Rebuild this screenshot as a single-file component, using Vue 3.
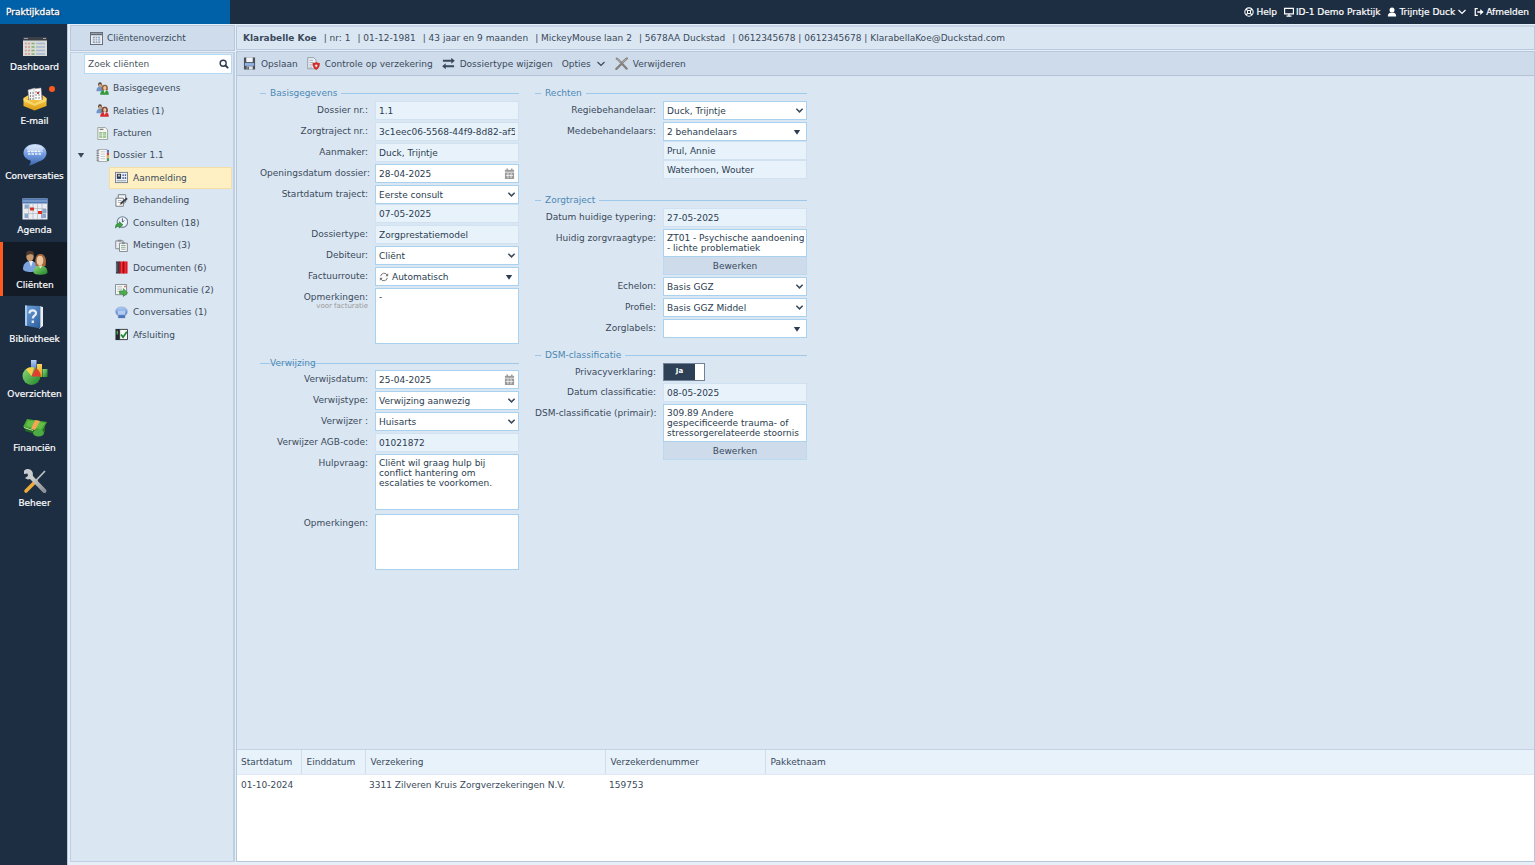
<template>
  <div class="app">
    <!-- Icon sprite -->
    <svg class="sprite" aria-hidden="true">
      <defs>
        <linearGradient id="gBlue" x1="0" y1="0" x2="0" y2="1">
          <stop offset="0" stop-color="#b9d2f5" />
          <stop offset="0.5" stop-color="#6f9ade" />
          <stop offset="1" stop-color="#3e68b0" />
        </linearGradient>
        <linearGradient id="gBook" x1="0" y1="0" x2="1" y2="1">
          <stop offset="0" stop-color="#6fa3dc" />
          <stop offset="1" stop-color="#2c5c9c" />
        </linearGradient>
        <linearGradient id="gGold" x1="0" y1="0" x2="0" y2="1">
          <stop offset="0" stop-color="#ffd85a" />
          <stop offset="1" stop-color="#dc9a12" />
        </linearGradient>
        <linearGradient id="gGreen" x1="0" y1="0" x2="1" y2="1">
          <stop offset="0" stop-color="#8fdc7a" />
          <stop offset="1" stop-color="#1f8427" />
        </linearGradient>
        <linearGradient id="gMetal" x1="0" y1="0" x2="1" y2="1">
          <stop offset="0" stop-color="#d9d9d9" />
          <stop offset="1" stop-color="#8b8f94" />
        </linearGradient>
      </defs>

      <symbol id="dashboard" viewBox="0 0 26 26">
        <rect x="1" y="5" width="24" height="19" fill="#d9dbd6" />
        <rect x="1" y="5" width="24" height="3.5" fill="#3c4046" />
        <path d="M2 6.5h4M21 6.5h3" stroke="#9aa0a6" />
        <path d="M3 11.5h5M3 15h5M3 18.5h5M3 22h5" stroke="#d99b87" stroke-width="1.4" stroke-dasharray="2 1" />
        <path d="M9.5 11.5h3M9.5 15h3M9.5 18.5h3M9.5 22h3" stroke="#7fb072" stroke-width="1.4" />
        <path d="M14 11.5h9M14 15h9M14 18.5h9M14 22h9" stroke="#a4b9d3" stroke-width="1.4" />
      </symbol>
      <symbol id="email" viewBox="0 0 26 26">
        <path d="M6 4l7-2 1.500 13-7 1z" fill="#f4f4f4" stroke="#aaa" stroke-width=".5" />
        <path d="M12 3l7-1 1 14-8 1z" fill="#fff" stroke="#aaa" stroke-width=".5" />
        <path d="M8.500 6v8M11 6v8M14 5v9M17 5v9" stroke="#8c8c92" stroke-dasharray="2 1" />
        <path d="M16 6v2" stroke="#d53a2d" stroke-width="2" />
        <path d="M1.500 12l5-3v5h14v-5l4 3v8l-12 4.500-11-4.500z" fill="url(#gGold)" />
        <path d="M1.500 12l11 5.500 12-5.500v3l-12 5-11-5z" fill="#ffe98e" opacity=".6" />
      </symbol>
      <symbol id="chat" viewBox="0 0 26 26">
        <path d="M13 3c7 0 11.500 4 11.500 9 0 4-3 7-7 8.300C15 21 11 24 7 24.500c1.500-2 2-3.500 1.500-5C4.500 18.500 1.500 15.500 1.500 12 1.500 7 6 3 13 3z" fill="url(#gBlue)" />
        <ellipse cx="13" cy="7.500" rx="8.500" ry="3.500" fill="#fff" opacity=".45" />
        <path d="M5.500 10.500h15M6 13h14" stroke="#eef4fd" stroke-width="1.300" stroke-dasharray="2.500 1" />
      </symbol>
      <symbol id="agenda" viewBox="0 0 26 26">
        <rect x=".5" y="3.500" width="25" height="21" fill="#e9ecf1" />
        <rect x=".5" y="3.500" width="25" height="5" fill="#4f79b5" />
        <path d="M1 6h24" stroke="#9db9df" />
        <path d="M2.500 9.500h5v4h-5zM2.500 19h3.500v4H2.500zM20 14h4.500v4H20zM19 19h5v4h-5z" fill="#8aa6cc" />
        <path d="M2 13.500h22M2 18.500h22M6.500 9v15M11 9v15M15.500 9v15M20 9v15" stroke="#b3b9c4" stroke-width=".7" />
        <path d="M8 12.500h4v3H8zM16 16h4v3h-4z" fill="#d6321e" />
      </symbol>
      <symbol id="clients" viewBox="0 0 26 26">
        <path d="M1 19c0-5 3-8 7.500-8s7 3 7 8c0 2-3 3-7 3s-7.500-1-7.500-3z" fill="#7ba2dd" />
        <path d="M7 11l2 6 2-6z" fill="#e9eef7" />
        <ellipse cx="8" cy="6.500" rx="3.700" ry="4.800" fill="#c79a6e" />
        <path d="M4 6C3.500 2 5.500.5 8.500.8c3 .2 4 2.200 3.400 5.200C11 3.500 7 3.500 4 6z" fill="#4b3a2d" />
        <path d="M11.500 22.500c0-4.500 3-7 7-7s7 2.500 7 7c0 3-14 3-14 0z" fill="url(#gGreen)" />
        <path d="M13.500 16c-1-9 1-12 5-12s6.500 4 5 12z" fill="#a5683a" />
        <ellipse cx="18" cy="10.500" rx="3.300" ry="4.800" fill="#ecc7a2" />
        <path d="M16.500 15.500l2 3 2-3z" fill="#f4ddc4" />
      </symbol>
      <symbol id="library" viewBox="0 0 26 26">
        <path d="M17 2l4 1v19l-4 3z" fill="#e9edf2" />
        <path d="M18.500 3v20" stroke="#9aa7b8" stroke-width=".7" />
        <path d="M3 1.500l15 .5v22.500L3 21.500z" fill="url(#gBook)" />
        <path d="M3 1.500l2 .1v20.300l-2-.4z" fill="#a9c9ee" />
        <path d="M7.500 9.500c0-4 6.500-4 6.500-.3 0 2.500-3.200 2.600-3.200 5.300M10.800 16.500v2.500" fill="none" stroke="#e6edf6" stroke-width="2.300" />
      </symbol>
      <symbol id="charts" viewBox="0 0 26 26">
        <rect x="9" y="1" width="5.500" height="13" fill="url(#gBlue)" />
        <rect x="15" y="5" width="5" height="13" fill="url(#gGold)" />
        <rect x="20.500" y="10" width="5" height="8" fill="url(#gGreen)" />
        <circle cx="9.500" cy="17" r="9" fill="url(#gGreen)" />
        <path d="M9.500 17L4 10.500c2-2 5-2.500 8-2z" fill="#f9d04b" />
        <path d="M9.500 17.500l4-8.500c3 1.500 5 4.500 5 8.500z" fill="#e33c31" />
      </symbol>
      <symbol id="finance" viewBox="0 0 26 26">
        <path d="M4 14l12 3 7-4v6l-7 4-6-3-7-2z" fill="#236b22" />
        <path d="M5 6l20 3-5 9L1 14z" fill="#48ab35" />
        <path d="M6 7.500l17 2.500-4 6-15-3z" fill="#8bd25c" opacity=".45" />
        <path d="M13 7l5 1-5 9-4-1z" fill="#f3a755" />
        <ellipse cx="16.500" cy="20" rx="5.500" ry="3.500" fill="#4cab43" />
        <path d="M2 14.500l9 3" stroke="#b5e7a5" />
      </symbol>
      <symbol id="tools" viewBox="0 0 26 26">
        <path d="M4 23L14 13" stroke="#eeab3a" stroke-width="3.600" stroke-linecap="round" />
        <path d="M13 13.500L23 3" stroke="#b9bdc2" stroke-width="1.800" />
        <path d="M8 8l14.500 15" stroke="url(#gMetal)" stroke-width="4" stroke-linecap="round" />
        <path d="M2 3c2-3 7-2.500 8.500 1 .8 2.500.4 5-1 6-2 2-4.500 1.800-6.500 0l3-2-.5-2.500-3.500.5z" fill="#c9cbce" />
      </symbol>

      <symbol id="table" viewBox="0 0 14 14">
        <rect x=".5" y=".5" width="13" height="13" fill="#eef1f4" stroke="#5d6875" />
        <path d="M1 2.500h12" stroke="#5d6875" stroke-width="2" />
        <path d="M3 5h8v7H3z" fill="#8ea2bb" />
        <path d="M3 7.300h8M3 9.600h8M5.700 5v7M8.300 5v7" stroke="#f4f6f9" stroke-width=".8" />
      </symbol>
      <symbol id="people-green" viewBox="0 0 14 14">
        <path d="M.5 10c0-4 1.500-5 4-5s4 1 4 5z" fill="#6f95ca" />
        <ellipse cx="4.300" cy="2.800" rx="2" ry="2.600" fill="#4c3a2d" />
        <ellipse cx="4.300" cy="3.800" rx="1.500" ry="1.900" fill="#cf9f76" />
        <path d="M6 9c-.5-5 1-6 3.500-6S13.500 5 12.500 9z" fill="#94603b" />
        <ellipse cx="9.500" cy="6.500" rx="1.700" ry="2.200" fill="#ecc49f" />
        <path d="M4.500 13.800c0-3.500 2-4.800 5-4.800s4.300 1.500 4.300 4.800z" fill="#339a3a" />
        <path d="M8.300 9l1.200 3 1.200-3z" fill="#fff" />
      </symbol>
      <symbol id="people-red" viewBox="0 0 14 14">
        <path d="M.5 10c0-4 1.500-5 4-5s4 1 4 5z" fill="#6f95ca" />
        <ellipse cx="4.300" cy="2.800" rx="2" ry="2.600" fill="#4c3a2d" />
        <ellipse cx="4.300" cy="3.800" rx="1.500" ry="1.900" fill="#cf9f76" />
        <path d="M6 9c-.5-5 1-6 3.500-6S13.500 5 12.500 9z" fill="#7c4630" />
        <ellipse cx="9.500" cy="6.500" rx="1.700" ry="2.200" fill="#ecc49f" />
        <path d="M4.500 13.800c0-3.500 2-4.800 5-4.800s4.300 1.500 4.300 4.800z" fill="#d52c2c" />
        <path d="M8.300 9l1.200 3 1.200-3z" fill="#fff" />
      </symbol>
      <symbol id="invoice" viewBox="0 0 14 14">
        <path d="M2 .5h8l2.500 2.500v10.500H2z" fill="#f5f6f4" stroke="#9aa09a" />
        <path d="M4 2.500h4" stroke="#555" />
        <path d="M3.500 5.500h7.500v6H3.500z" fill="#86b97b" />
        <path d="M3.500 7.500h7.500M3.500 9.500h7.500M7 5.500v6" stroke="#f3f7f1" stroke-width=".8" />
      </symbol>
      <symbol id="dossier" viewBox="0 0 14 14">
        <path d="M2 .5h10v13H2z" fill="#fbfbfb" stroke="#a0a4aa" />
        <path d="M.5 2h3M.5 4.500h3M.5 7h3M.5 9.500h3M.5 12h3" stroke="#646a73" stroke-width=".9" />
        <path d="M5 3h5M5 5.500h5M5 8h5M5 10.500h5" stroke="#b1b5bb" stroke-width=".8" />
        <path d="M13 1v3" stroke="#4472c4" stroke-width="2" />
        <path d="M13 4v3" stroke="#d33" stroke-width="2" />
        <path d="M13 7v3" stroke="#e9b52a" stroke-width="2" />
        <path d="M13 10v3" stroke="#3f9a46" stroke-width="2" />
      </symbol>
      <symbol id="card" viewBox="0 0 14 14">
        <rect x=".5" y="1.500" width="13" height="11" fill="#eff2f7" stroke="#777f8b" />
        <rect x="2" y="3" width="4.500" height="5.500" fill="#263c66" />
        <circle cx="4.300" cy="5" r="1.200" fill="#e6b58f" />
        <path d="M8 3.500h1.500v2H8zM10.500 3.500H12v2h-1.500zM8 6.500h1.500v2H8zM10.500 6.500H12v2h-1.500z" fill="#526a92" />
        <path d="M2 10.500h10" stroke="#8b97aa" />
      </symbol>
      <symbol id="edit" viewBox="0 0 14 14">
        <path d="M3.500.8h8v8l-3 2h-5z" fill="#f5f6f7" stroke="#6f757c" />
        <path d="M1 4.500h8v8.700H1z" fill="#fff" stroke="#6f757c" />
        <path d="M3 7h4M3 9h3" stroke="#a8adb3" />
        <path d="M6 10.500l7-6" stroke="#3c4148" stroke-width="2.200" />
        <path d="M5 11.500l1.500-.4" stroke="#c69b5a" stroke-width="1.200" />
      </symbol>
      <symbol id="clock" viewBox="0 0 14 14">
        <circle cx="8" cy="6.500" r="5.700" fill="#eef4fb" stroke="#6d7f98" stroke-width="1.200" />
        <path d="M8 2.500V6.500l2-1.500" fill="none" stroke="#47566b" />
        <path d="M.5 13c0-3.500 1-5 4-5V6l4 3.500-4 3.500v-2C3 11 2 11.500.5 13z" fill="#3ea443" stroke="#1d6e29" stroke-width=".6" />
      </symbol>
      <symbol id="clipboards" viewBox="0 0 14 14">
        <path d="M.8 2h8v8.500h-8z" fill="#edf0f2" stroke="#80868d" />
        <path d="M3 .8h4v2H3z" fill="#868b91" />
        <path d="M4.800 4.500h8.500v9H4.800z" fill="#f8f9f9" stroke="#80868d" />
        <path d="M7.500 3.500h3v2h-3z" fill="#868b91" />
        <path d="M6.500 7h5M6.500 9h5M6.500 11h5" stroke="#7fa083" stroke-width=".9" />
      </symbol>
      <symbol id="binders" viewBox="0 0 14 14">
        <path d="M1 .5h4v13H1z" fill="#353a40" />
        <path d="M2 2v10" stroke="#79818a" />
        <path d="M5 .5h8.500v13H5z" fill="#dc1523" />
        <path d="M7 1v12M11 1v12" stroke="#f04a48" stroke-width=".8" />
        <path d="M5 .5v13M9.300.5v13" stroke="#83080f" stroke-width=".8" />
      </symbol>
      <symbol id="send" viewBox="0 0 14 14">
        <path d="M.5.500h12v11H.5z" fill="#f5f7f6" stroke="#7c858b" />
        <path d="M10 2h1.500v1.500H10z" fill="#d14133" />
        <path d="M2.500 3h5M2.500 5.500h5M2.500 8h3" stroke="#a9b3b5" />
        <path d="M5 7.500h4V5l4.500 4.500-4.500 4v-3H5z" fill="#50b04a" stroke="#247c2b" stroke-width=".7" />
      </symbol>
      <symbol id="bubble" viewBox="0 0 14 14">
        <path d="M7 1c4 0 6.300 2.200 6.300 5 0 2-1 3.500-2.500 4.300v2.500H3.500v-2.500C1.700 9.500.7 8 .7 6 .7 3.200 3 1 7 1z" fill="url(#gBlue)" stroke="#7890b8" stroke-width=".5" />
        <path d="M3 5h8v4.500H3z" fill="#b9d0f2" opacity=".9" />
      </symbol>
      <symbol id="closing" viewBox="0 0 14 14">
        <path d="M.5 1h5v12h-5z" fill="#24292e" />
        <path d="M2.500 3v4" stroke="#4da653" stroke-width="1.500" />
        <path d="M5 1.500h8.500v11H5z" fill="#f5f8f5" stroke="#30363c" />
        <path d="M6.500 7l2.200 3 4-6" fill="none" stroke="#17882b" stroke-width="1.800" />
      </symbol>
      <symbol id="save" viewBox="0 0 14 14">
        <path d="M1 .5h12v13H1z" fill="#4a525c" />
        <path d="M3.500.500h7v5h-7z" fill="#f2f4f6" />
        <path d="M2 6.500h10v3H2z" fill="#8fb3ea" />
        <path d="M4 10h6.500v3.500H4z" fill="#dfe3e7" />
        <path d="M5.500 10.500v3" stroke="#3d444d" stroke-width="1.500" />
      </symbol>
      <symbol id="shield" viewBox="0 0 14 14">
        <path d="M.8.700h6.500l2.500 2.500v9.500h-9z" fill="#eef1f5" stroke="#8f99a6" />
        <path d="M2.500 3.500h4M2.500 6h5M2.500 8.500h4M2.500 11h3" stroke="#8c98a8" stroke-width=".8" />
        <path d="M6 6.500c1.500 0 3-.5 4-1.200 1 .7 2.500 1.200 3.800 1.200 0 4-1 6-3.900 7.400C7 12.500 6 10.500 6 6.500z" fill="#d22b2b" />
        <path d="M9.900 8v3M8.400 9.500h3" stroke="#fff" stroke-width="1" />
      </symbol>
      <symbol id="swap" viewBox="0 0 14 14">
        <path d="M1 4h10M3 10h10" stroke="currentColor" stroke-width="2" />
        <path d="M10 .8L13.800 4 10 7.200zM4 6.800L.2 10 4 13.200z" fill="currentColor" />
      </symbol>
      <symbol id="cross" viewBox="0 0 14 14">
        <path d="M2 1.800C5 4 9 9 12.500 12.500M12.800 1.500C9 4.500 5.500 9 1.500 12.800" stroke="#85817d" stroke-width="2.500" stroke-linecap="round" fill="none" />
        <path d="M2 1.500l4 4M12.500 1.500L8 6" stroke="#b9b6b2" stroke-width="1" />
      </symbol>
      <symbol id="chevron" viewBox="0 0 10 10">
        <path d="M1.500 3l3.500 3.500L8.500 3" fill="none" stroke="currentColor" stroke-width="1.700" />
      </symbol>
      <symbol id="chevron-thin" viewBox="0 0 10 10">
        <path d="M1.500 3l3.500 3.500L8.500 3" fill="none" stroke="currentColor" stroke-width="1.200" />
      </symbol>
      <symbol id="triangle" viewBox="0 0 10 10">
        <path d="M1 2.500h8L5 8.500z" fill="currentColor" />
      </symbol>
      <symbol id="calendar" viewBox="0 0 12 12">
        <path d="M1 2h10v10H1z" fill="#9a9a9a" />
        <path d="M3.500.5v2.500M8.500.5v2.500" stroke="#9a9a9a" stroke-width="1.600" />
        <path d="M1 4.600h10M2 8.100h8M4.300 5.500V11M7.700 5.500V11" stroke="#fff" stroke-width=".8" />
      </symbol>
      <symbol id="refresh" viewBox="0 0 12 12">
        <path d="M2 5a4.200 4.200 0 0 1 8-1M10 7a4.200 4.200 0 0 1-8 1" fill="none" stroke="#777" stroke-width="1.200" />
        <path d="M11 1.500v3.500H7.500zM1 10.500V7h3.500z" fill="#777" />
      </symbol>
      <symbol id="search" viewBox="0 0 12 12">
        <circle cx="5" cy="5" r="3.600" fill="none" stroke="#2b3b4e" stroke-width="1.700" />
        <path d="M7.500 7.500l3.500 3.500" stroke="#2b3b4e" stroke-width="2.200" />
      </symbol>
      <symbol id="help" viewBox="0 0 12 12">
        <circle cx="6" cy="6" r="5" fill="none" stroke="#fff" stroke-width="1.300" />
        <circle cx="6" cy="6" r="2" fill="none" stroke="#fff" stroke-width="1.200" />
        <path d="M2.500 2.500l2 2M9.500 2.500l-2 2M2.500 9.500l2-2M9.500 9.500l-2-2" stroke="#fff" stroke-width="1.500" />
      </symbol>
      <symbol id="monitor" viewBox="0 0 12 12">
        <path d="M.7 1.700h10.600v6.600H.7z" fill="none" stroke="#fff" stroke-width="1.400" />
        <path d="M3 10.800h6M6 8.500v2" stroke="#fff" stroke-width="1.500" />
      </symbol>
      <symbol id="user" viewBox="0 0 12 12">
        <circle cx="6" cy="3.500" r="3" fill="#fff" />
        <path d="M1 11.500c0-3.500 1.500-4.500 3-4.700h4c1.500.2 3 1.200 3 4.700z" fill="#fff" />
      </symbol>
      <symbol id="logout" viewBox="0 0 12 12">
        <path d="M4.500 2H1.500v8h3" fill="none" stroke="#fff" stroke-width="1.500" />
        <path d="M4 5h3.500V2.500L11.500 6 7.500 9.500V7H4z" fill="#fff" />
      </symbol>
    </svg>

    <header class="topbar">
      <div class="brand">Praktijkdata</div>
      <nav class="account">
        <a href="#"><svg class="ico-xs"><use href="#help" /></svg>Help</a>
        <a href="#"><svg class="ico-xs"><use href="#monitor" /></svg>ID-1 Demo Praktijk</a>
        <a href="#"><svg class="ico-xs"><use href="#user" /></svg>Trijntje Duck<svg class="ico-xs"><use href="#chevron-thin" /></svg></a>
        <a href="#"><svg class="ico-xs"><use href="#logout" /></svg>Afmelden</a>
      </nav>
    </header>

    <div class="body">
      <nav class="modules">
        <div class="module-list">
          <a v-for="item in modules" :key="item.label" href="#" class="module" :class="{ active: item.active }">
            <svg class="ico-lg"><use :href="`#${item.icon}`" /></svg>
            <span>{{ item.label }}</span>
            <i v-if="item.badge" class="dot"></i>
          </a>
        </div>
      </nav>

      <aside class="side">
        <a href="#" class="side-head"><svg class="ico-sm"><use href="#table" /></svg>Cliëntenoverzicht</a>
        <div class="side-body">
          <div class="search">
            <input v-model="query" type="text" aria-label="Zoek cliënten" placeholder="Zoek cliënten" />
            <button type="button" aria-label="Zoeken"><svg class="ico-xs"><use href="#search" /></svg></button>
          </div>
          <div class="tree">
            <a
              v-for="node in tree"
              :key="node.label"
              href="#"
              class="node"
              :class="{ child: node.child, selected: node.selected }"
            >
              <svg v-if="node.open" class="expander"><use href="#triangle" /></svg>
              <svg class="ico-sm"><use :href="`#${node.icon}`" /></svg>
              <span>{{ node.label }}</span>
            </a>
          </div>
        </div>
      </aside>

      <main class="main">
        <div class="patient">
          <b>Klarabelle Koe</b>
          <span v-for="part in patient" :key="part">| {{ part }}</span>
        </div>

        <div class="content">
          <div class="toolbar">
            <button type="button"><svg class="ico-sm"><use href="#save" /></svg>Opslaan</button>
            <button type="button"><svg class="ico-sm"><use href="#shield" /></svg>Controle op verzekering</button>
            <button type="button"><svg class="ico-sm"><use href="#swap" /></svg>Dossiertype wijzigen</button>
            <button type="button">Opties<svg class="ico-xs"><use href="#chevron-thin" /></svg></button>
            <button type="button"><svg class="ico-sm"><use href="#cross" /></svg>Verwijderen</button>
          </div>

          <form class="form" @submit.prevent>
            <div v-for="(column, c) in columns" :key="c" class="column" :class="`column-${c + 1}`">
              <section v-for="group in column" :key="group.title" class="group" :class="group.cls">
                <h2><span>{{ group.title }}</span></h2>
                <div v-for="field in group.fields" :key="field.id" class="row">
                  <label :for="field.id">{{ field.label }}<small v-if="field.hint">{{ field.hint }}</small></label>
                  <div class="control">
                    <input v-if="field.type === 'readonly'" :id="field.id" type="text" class="box readonly" :value="field.value" readonly />

                    <div v-else-if="field.type === 'date'" class="holder">
                      <input :id="field.id" type="text" class="box" :value="field.value" />
                      <svg class="cal"><use href="#calendar" /></svg>
                    </div>

                    <div v-else-if="field.type === 'select'" class="holder">
                      <select :id="field.id" class="box">
                        <option>{{ field.value }}</option>
                      </select>
                      <svg class="arrow"><use href="#chevron" /></svg>
                    </div>

                    <button v-else-if="field.type === 'picker'" :id="field.id" type="button" class="box picker">
                      <svg v-if="field.icon" class="ico-xs"><use :href="`#${field.icon}`" /></svg>
                      <span>{{ field.value }}</span>
                      <svg class="tri"><use href="#triangle" /></svg>
                    </button>

                    <span v-else-if="field.type === 'toggle'" class="toggle">
                      <input :id="field.id" v-model="privacy" type="checkbox" />
                      <span class="on">Ja</span>
                    </span>

                    <textarea v-else-if="field.type === 'summary'" :id="field.id" class="box" :rows="field.rows" :value="field.value" readonly></textarea>
                    <textarea v-else :id="field.id" class="box notes" :value="field.value"></textarea>

                    <button v-if="field.type === 'summary'" type="button" class="edit">Bewerken</button>
                    <div v-for="line in field.extra" :key="line" class="box readonly extra">{{ line }}</div>
                  </div>
                </div>
              </section>
            </div>
          </form>

          <div class="grid">
            <table>
              <thead>
                <tr>
                  <th v-for="col in insuranceCols" :key="col">{{ col }}</th>
                </tr>
              </thead>
              <tbody>
                <tr v-for="(row, r) in insurances" :key="r">
                  <td v-for="(cell, i) in row" :key="i">{{ cell }}</td>
                </tr>
              </tbody>
            </table>
          </div>
        </div>
      </main>
    </div>
  </div>
</template>

<script setup>
import { ref } from "vue";

const query = ref("");
const privacy = ref(true);

const modules = [
  { label: "Dashboard", icon: "dashboard" },
  { label: "E-mail", icon: "email", badge: true },
  { label: "Conversaties", icon: "chat" },
  { label: "Agenda", icon: "agenda" },
  { label: "Cliënten", icon: "clients", active: true },
  { label: "Bibliotheek", icon: "library" },
  { label: "Overzichten", icon: "charts" },
  { label: "Financiën", icon: "finance" },
  { label: "Beheer", icon: "tools" },
];

const tree = [
  { label: "Basisgegevens", icon: "people-green" },
  { label: "Relaties (1)", icon: "people-red" },
  { label: "Facturen", icon: "invoice" },
  { label: "Dossier 1.1", icon: "dossier", open: true },
  { label: "Aanmelding", icon: "card", child: true, selected: true },
  { label: "Behandeling", icon: "edit", child: true },
  { label: "Consulten (18)", icon: "clock", child: true },
  { label: "Metingen (3)", icon: "clipboards", child: true },
  { label: "Documenten (6)", icon: "binders", child: true },
  { label: "Communicatie (2)", icon: "send", child: true },
  { label: "Conversaties (1)", icon: "bubble", child: true },
  { label: "Afsluiting", icon: "closing", child: true },
];

const patient = [
  "nr: 1",
  "01-12-1981",
  "43 jaar en 9 maanden",
  "MickeyMouse laan 2",
  "5678AA Duckstad",
  "0612345678 | 0612345678 | KlarabellaKoe@Duckstad.com",
];

// Form definition: two columns with groups of fields
const columns = [
  [
    {
      title: "Basisgegevens",
      fields: [
        { id: "dossier-nr", label: "Dossier nr.:", type: "readonly", value: "1.1" },
        { id: "traject", label: "Zorgtraject nr.:", type: "readonly", value: "3c1eec06-5568-44f9-8d82-af5" },
        { id: "aanmaker", label: "Aanmaker:", type: "readonly", value: "Duck, Trijntje" },
        { id: "opening", label: "Openingsdatum dossier:", type: "date", value: "28-04-2025" },
        { id: "start", label: "Startdatum traject:", type: "select", value: "Eerste consult", extra: ["07-05-2025"] },
        { id: "dossiertype", label: "Dossiertype:", type: "readonly", value: "Zorgprestatiemodel" },
        { id: "debiteur", label: "Debiteur:", type: "select", value: "Cliënt" },
        { id: "route", label: "Factuurroute:", type: "picker", value: "Automatisch", icon: "refresh" },
        { id: "notitie", label: "Opmerkingen:", hint: "voor facturatie", type: "notes", value: "-" },
      ],
    },
    {
      title: "Verwijzing",
      cls: "referral",
      fields: [
        { id: "verwijsdatum", label: "Verwijsdatum:", type: "date", value: "25-04-2025" },
        { id: "verwijstype", label: "Verwijstype:", type: "select", value: "Verwijzing aanwezig" },
        { id: "verwijzer", label: "Verwijzer :", type: "select", value: "Huisarts" },
        { id: "agb", label: "Verwijzer AGB-code:", type: "readonly", value: "01021872" },
        {
          id: "hulpvraag",
          label: "Hulpvraag:",
          type: "notes",
          value: "Cliënt wil graag hulp bij conflict hantering om escalaties te voorkomen.",
        },
        { id: "opmerkingen", label: "Opmerkingen:", type: "notes", value: "" },
      ],
    },
  ],
  [
    {
      title: "Rechten",
      cls: "rights",
      fields: [
        { id: "regie", label: "Regiebehandelaar:", type: "select", value: "Duck, Trijntje" },
        {
          id: "mede",
          label: "Medebehandelaars:",
          type: "picker",
          value: "2 behandelaars",
          extra: ["Prul, Annie", "Waterhoen, Wouter"],
        },
      ],
    },
    {
      title: "Zorgtraject",
      cls: "care",
      fields: [
        { id: "typering", label: "Datum huidige typering:", type: "readonly", value: "27-05-2025" },
        {
          id: "zorgvraag",
          label: "Huidig zorgvraagtype:",
          type: "summary",
          rows: 2,
          value: "ZT01 - Psychische aandoening - lichte problematiek",
        },
        { id: "echelon", label: "Echelon:", type: "select", value: "Basis GGZ" },
        { id: "profiel", label: "Profiel:", type: "select", value: "Basis GGZ Middel" },
        { id: "labels", label: "Zorglabels:", type: "picker", value: "" },
      ],
    },
    {
      title: "DSM-classificatie",
      fields: [
        { id: "privacy", label: "Privacyverklaring:", type: "toggle" },
        { id: "classdatum", label: "Datum classificatie:", type: "readonly", value: "08-05-2025" },
        {
          id: "primair",
          label: "DSM-classificatie (primair):",
          type: "summary",
          rows: 3,
          value: "309.89 Andere gespecificeerde trauma- of stressorgerelateerde stoornis",
        },
      ],
    },
  ],
];

const insuranceCols = ["Startdatum", "Einddatum", "Verzekering", "Verzekerdenummer", "Pakketnaam"];
const insurances = [["01-10-2024", "", "3311 Zilveren Kruis Zorgverzekeringen N.V.", "159753", ""]];
</script>

<style>
body {
  margin: 0;
}
</style>

<style scoped>
.app {
  display: flex;
  flex-direction: column;
  min-height: 100vh;
  font: 9px/12px Verdana, "DejaVu Sans", sans-serif;
  color: #3a4a5b;
  background: #dae6f2;
}

.app * {
  box-sizing: border-box;
}

.sprite {
  position: absolute;
  width: 0;
  height: 0;
}

a {
  color: inherit;
  text-decoration: none;
}

button,
input,
select,
textarea {
  margin: 0;
  font: inherit;
  color: inherit;
}

svg {
  flex: none;
}

.ico-xs {
  width: 10px;
  height: 10px;
}

.ico-sm {
  width: 13px;
  height: 13px;
}

.ico-lg {
  width: 26px;
  height: 26px;
}

/* Top bar */
.topbar {
  display: flex;
  justify-content: space-between;
  height: 24px;
  color: #fff;
  background: #1e2e42;
}

.brand {
  width: 230px;
  padding: 6px;
  background: #0060a8;
  text-shadow: 1px 1px 1px #10263d;
  -webkit-text-stroke: 0.3px #fff;
}

.account {
  display: flex;
  align-items: center;
  gap: 7px;
  padding-right: 6px;
  -webkit-text-stroke: 0.2px #fff;
}

.account a {
  display: flex;
  align-items: center;
  gap: 2px;
}

.body {
  display: flex;
  flex: 1;
}

/* Module bar */
.modules {
  width: 67px;
  background: #1e2e42;
}

.module-list {
  display: flex;
  flex-direction: column;
  height: 490px;
}

.module {
  position: relative;
  display: flex;
  flex: 1;
  flex-direction: column;
  align-items: center;
  gap: 3px;
  padding: 8px 0 0 2px;
  color: #fff;
  -webkit-text-stroke: 0.2px #fff;
}

.module.active {
  padding-right: 2px;
  background: #131b27;
  border-left: 3px solid #ff5a1f;
}

.dot {
  position: absolute;
  top: 8px;
  right: 12px;
  width: 6px;
  height: 6px;
  border-radius: 50%;
  background: #ff5a1f;
}

/* Client tree */
.side {
  display: flex;
  flex-direction: column;
  gap: 1px;
  width: 169px;
  padding: 1px 1px 3px 2px;
  background: #e6eef7;
  border-left: 1px solid #b8c7dc;
}

.side-head {
  display: flex;
  align-items: center;
  gap: 4px;
  height: 26px;
  padding-left: 19px;
  background: #cfdcec;
  border: 1px solid #b7c8dc;
}

.side-body {
  flex: 1;
  padding: 1px 1px 0 13px;
  background: #dae6f2;
  border: 1px solid #c0cfe2;
  border-right: 2px solid #c0cfe2;
}

.search {
  display: flex;
  align-items: center;
  height: 20px;
  background: #fff;
  border: 1px solid #b5daf5;
}

.search input {
  flex: 1;
  min-width: 0;
  padding: 2px 3px;
  border: 0;
  outline: 0;
  background: none;
}

.search input::placeholder {
  color: #4b5662;
  opacity: 1;
}

.search button {
  display: flex;
  padding: 2px;
  border: 0;
  background: none;
}

.tree {
  display: flex;
  flex-direction: column;
  height: 269px;
  margin-top: 3px;
}

.node {
  position: relative;
  display: flex;
  flex: 1;
  align-items: center;
  gap: 4px;
  padding-left: 11px;
  border: 1px solid transparent;
}

.node.child {
  gap: 5px;
  margin-left: 25px;
  padding-left: 5px;
}

.node.selected {
  background: #fff0c4;
  border-color: #f3dfa4;
  border-radius: 1px;
}

.expander {
  position: absolute;
  left: -8px;
  width: 8px;
  height: 8px;
}

/* Main area */
.main {
  display: flex;
  flex: 1;
  flex-direction: column;
  gap: 1px;
  min-width: 0;
  padding: 1px 0 3px;
  background: #e6eef7;
}

.patient {
  display: flex;
  gap: 7px;
  height: 25px;
  padding: 5px 6px;
  white-space: nowrap;
  background: #dae6f2;
  border: 1px solid #b9c9dd;
  border-top: 2px solid #c6d4e5;
}

.content {
  display: flex;
  flex: 1;
  flex-direction: column;
  background: #dae6f2;
  border: 1px solid #b7c7dc;
}

.toolbar {
  display: flex;
  align-items: center;
  gap: 9px;
  height: 24px;
  padding-left: 6px;
  background: #cedbeb;
  border-bottom: 1px solid #b4c3d8;
}

.toolbar button {
  display: flex;
  align-items: center;
  gap: 5px;
  padding: 0;
  white-space: nowrap;
  border: 0;
  background: none;
}

/* Form */
.form {
  display: flex;
  flex: 1;
  gap: 16px;
  padding: 10px 23px;
}

.column-1 {
  --label: 115px;
}

.column-2 {
  --label: 128px;
}

.group {
  margin-bottom: 12px;
}

.rights {
  margin-bottom: 14px;
}

.care {
  margin-bottom: 10px;
}

h2 {
  display: flex;
  align-items: center;
  gap: 4px;
  height: 14px;
  margin: 0 0 1px;
  font: inherit;
  color: #4c88b5;
}

h2::before,
h2::after {
  content: "";
  flex: 1;
  height: 1px;
  background: #9dc8e9;
}

h2::before {
  flex: none;
  width: 6px;
}

.referral h2 {
  gap: 0;
  margin: 0;
  background: linear-gradient(#b5d6ef, #b5d6ef) center / 100% 1px no-repeat;
}

.referral h2::before {
  width: 10px;
}

.row {
  display: grid;
  grid-template-columns: var(--label) 144px;
  margin-bottom: 2px;
}

.row label {
  padding: 3px 7px 0 0;
  text-align: right;
  white-space: nowrap;
}

.row small {
  display: block;
  font-size: 7px;
  line-height: 6px;
  color: #9a9a9a;
}

.control {
  display: flex;
  flex-direction: column;
}

.box {
  display: block;
  width: 100%;
  height: 19px;
  padding: 2px 3px;
  color: #2c3d50;
  background: #fff;
  border: 1px solid #a9d2f0;
  border-radius: 0;
  outline: 0;
  appearance: none;
}

.box.readonly {
  background: #e8f2fb;
  border-color: #d0e1f1;
}

.box.extra {
  padding-top: 3px;
}

.holder {
  position: relative;
}

.arrow,
.cal {
  position: absolute;
  pointer-events: none;
}

.arrow {
  top: 5px;
  right: 3px;
  width: 9px;
  height: 9px;
}

.cal {
  top: 4px;
  right: 4px;
  width: 11px;
  height: 11px;
}

.picker {
  display: flex;
  align-items: center;
  gap: 3px;
  text-align: left;
}

.picker span {
  flex: 1;
}

.tri {
  width: 8px;
  height: 8px;
  margin-right: 2px;
}

textarea.box {
  height: auto;
  padding: 3px 0 3px 3px;
  line-height: 10px;
  resize: none;
  overflow: hidden;
}

textarea.notes {
  height: 56px;
}

.referral textarea.notes {
  margin-bottom: 2px;
}

.edit {
  height: 18px;
  padding: 0;
  background: #cedbeb;
  border: 1px solid #bcd9f0;
  border-top: 0;
}

.toggle {
  display: flex;
  position: relative;
  width: 42px;
  height: 18px;
  background: #fff;
  border: 1px solid #6f8298;
}

.toggle input {
  position: absolute;
  inset: 0;
  width: 100%;
  height: 100%;
  opacity: 0;
}

.toggle .on {
  width: 31px;
  font-size: 7px;
  font-weight: bold;
  line-height: 15px;
  text-align: center;
  color: #fff;
  background: #2e4055;
}

/* Insurance table */
.grid {
  height: 112px;
  background: #fff;
  border-top: 1px solid #c4d2e4;
}

table {
  width: 100%;
  table-layout: fixed;
  border-collapse: collapse;
}

th {
  height: 24px;
  padding: 0 4px;
  font-weight: normal;
  text-align: left;
  background: #e8f2fb;
  border-right: 1px solid #d0dce9;
  border-bottom: 1px solid #e0e9f3;
}

th:nth-child(-n + 2) {
  width: 64px;
}

th:nth-child(3) {
  width: 240px;
}

th:nth-child(4) {
  width: 160px;
}

th:last-child {
  border-right: 0;
}

th + th {
  padding-left: 5px;
}

td {
  height: 22px;
  padding: 0 4px;
  white-space: nowrap;
}
</style>
